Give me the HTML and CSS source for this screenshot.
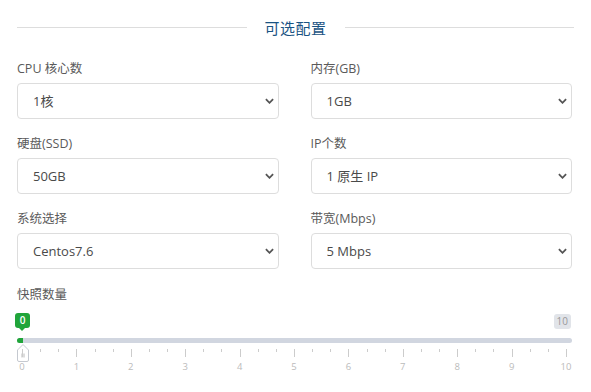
FILE: index.html
```html
<html lang="zh-CN">
<head>
  <meta charset="UTF-8" />
  <meta name="viewport" content="width=device-width, initial-scale=1.0" />
  <title>可选配置</title>
  <link rel="stylesheet" href="styles.css">
</head>
<body>
  <div class="container">
    <div class="section-title">
      <span class="line"></span>
      <h2>可选配置</h2>
      <span class="line"></span>
    </div>

    <div class="form-grid">
      <div class="form-group">
        <label>CPU 核心数</label>
        <div class="select-wrap">
          <select><option>1核</option><option>2核</option><option>4核</option></select>
          <svg class="chevron" viewBox="0 0 10 6"><path d="M1 1 L5 5 L9 1" /></svg>
        </div>
      </div>
      <div class="form-group">
        <label>内存(GB)</label>
        <div class="select-wrap">
          <select><option>1GB</option><option>2GB</option><option>4GB</option></select>
          <svg class="chevron" viewBox="0 0 10 6"><path d="M1 1 L5 5 L9 1" /></svg>
        </div>
      </div>
      <div class="form-group">
        <label>硬盘(SSD)</label>
        <div class="select-wrap">
          <select><option>50GB</option><option>100GB</option></select>
          <svg class="chevron" viewBox="0 0 10 6"><path d="M1 1 L5 5 L9 1" /></svg>
        </div>
      </div>
      <div class="form-group">
        <label>IP个数</label>
        <div class="select-wrap">
          <select><option>1 原生 IP</option><option>2 原生 IP</option></select>
          <svg class="chevron" viewBox="0 0 10 6"><path d="M1 1 L5 5 L9 1" /></svg>
        </div>
      </div>
      <div class="form-group">
        <label>系统选择</label>
        <div class="select-wrap">
          <select><option>Centos7.6</option><option>Ubuntu 20.04</option></select>
          <svg class="chevron" viewBox="0 0 10 6"><path d="M1 1 L5 5 L9 1" /></svg>
        </div>
      </div>
      <div class="form-group">
        <label>带宽(Mbps)</label>
        <div class="select-wrap">
          <select><option>5 Mbps</option><option>10 Mbps</option></select>
          <svg class="chevron" viewBox="0 0 10 6"><path d="M1 1 L5 5 L9 1" /></svg>
        </div>
      </div>
    </div>

    <div class="form-group slider-group">
      <label>快照数量</label>
      <div class="range-slider">
        <span class="tip-value">0</span>
        <span class="tip-max">10</span>
        <div class="track"><div class="bar" style="width: 6px"></div></div>
        <svg class="handle" viewBox="0 0 12 18">
          <path class="shape" d="M0.5 6 L6 0.5 L11.5 6 V16 Q11.5 17.5 10 17.5 H2 Q0.5 17.5 0.5 16 Z" />
          <path class="grip" d="M5 9.5 V13.5 M7 9.5 V13.5" />
        </svg>
        <div class="grid" id="grid"></div>
      </div>
    </div>
  </div>

  <script>
    // 刻度：每个整数一个大刻度，中间两个小刻度
    const grid = document.getElementById('grid');
    for (let i = 0; i <= 30; i++) {
      const pos = (i / 30) * 100;
      const tick = document.createElement('span');
      tick.className = i % 3 === 0 ? 'tick big' : 'tick';
      tick.style.left = pos + '%';
      grid.appendChild(tick);
      if (i % 3 === 0) {
        const num = document.createElement('span');
        num.className = 'num';
        num.style.left = pos + '%';
        num.textContent = i / 3;
        grid.appendChild(num);
      }
    }
  </script>
</body>
</html>
```

FILE: styles.css
```css
* {
  margin: 0;
  padding: 0;
  box-sizing: border-box;
}

body {
  font-family: 'Open Sans', 'Noto Sans CJK SC', sans-serif;
  background: #fff;
  color: #555;
}

.container {
  padding: 12px 17px 0 17px;
}

.section-title {
  display: flex;
  align-items: center;
  gap: 18px;
  height: 30px;
  margin-bottom: 17px;
}

.section-title .line {
  flex: 1;
  height: 1px;
  background: #ddd;
}

.section-title h2 {
  font-size: 15px;
  font-weight: 400;
  color: #1a5383;
  letter-spacing: 0.5px;
}

.form-grid {
  display: grid;
  grid-template-columns: 1fr 1fr;
  column-gap: 32px;
  row-gap: 15px;
  padding-right: 2px;
}

.form-group label {
  display: block;
  height: 20px;
  line-height: 20px;
  font-size: 12.5px;
  color: #5a5a5a;
  margin-bottom: 4px;
}

.select-wrap {
  position: relative;
}

.select-wrap select {
  width: 100%;
  height: 36px;
  padding: 0 15px;
  border: 1px solid #ddd;
  border-radius: 4px;
  background: #fff;
  font-family: 'Open Sans', 'Noto Sans CJK SC', sans-serif;
  font-size: 13px;
  color: #4a4a4a;
  appearance: none;
  -webkit-appearance: none;
  outline: none;
}

.chevron {
  position: absolute;
  right: 5px;
  top: 15px;
  width: 9px;
  height: 6px;
  fill: none;
  stroke: #555;
  stroke-width: 2;
  pointer-events: none;
}

.slider-group {
  margin-top: 16px;
}

.range-slider {
  position: relative;
  height: 66px;
}

.tip-value {
  position: absolute;
  left: -2px;
  top: 4px;
  width: 15px;
  height: 15px;
  line-height: 15px;
  text-align: center;
  background: #20a53a;
  color: #fff;
  font-size: 10px;
  font-weight: 600;
  border-radius: 3px;
}

.tip-value::after {
  content: '';
  position: absolute;
  left: 4px;
  bottom: -3px;
  border-left: 3.5px solid transparent;
  border-right: 3.5px solid transparent;
  border-top: 3px solid #20a53a;
}

.tip-max {
  position: absolute;
  right: 3px;
  top: 5px;
  height: 15px;
  line-height: 15px;
  padding: 0 3px;
  background: #e1e4e9;
  color: #999;
  font-size: 10px;
  border-radius: 3px;
}

.track {
  position: absolute;
  left: 0;
  right: 2px;
  top: 29px;
  height: 5px;
  background: #d1d6e0;
  border-radius: 3px;
  overflow: hidden;
}

.track .bar {
  height: 100%;
  background: #20a53a;
}

.handle {
  position: absolute;
  left: 0;
  top: 35px;
  width: 12px;
  height: 18px;
}

.handle .shape {
  fill: #fff;
  stroke: #c5c9d0;
  stroke-width: 1;
}

.handle .grip {
  fill: none;
  stroke: #bbb;
  stroke-width: 1;
}

.grid {
  position: absolute;
  left: 5px;
  right: 8px;
  top: 40px;
  height: 24px;
}

.tick {
  position: absolute;
  top: 0;
  width: 1px;
  height: 3px;
  background: #ccc;
}

.tick.big {
  height: 8px;
}

.num {
  position: absolute;
  top: 12px;
  transform: translateX(-50%);
  font-size: 9.5px;
  line-height: 12px;
  color: #bbb;
}
```
